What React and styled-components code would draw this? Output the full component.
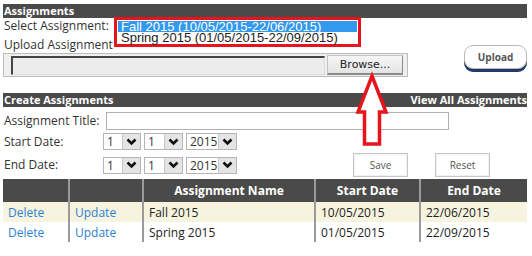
import React from 'react';
import styled, { createGlobalStyle } from 'styled-components';

const GlobalStyle = createGlobalStyle`
  body {
    margin: 0;
    background: #fff;
    font-family: "Open Sans", "Noto Sans", sans-serif;
    color: #333;
  }
`;

const Page = styled.div`
  position: relative;
  width: 524px;
  padding: 4px 5px 0 3px;
`;

const Bar = styled.div`
  height: 14px;
  line-height: 14px;
  background: #4a4a4a;
  color: #fff;
  font-size: 11px;
  font-weight: 700;
  padding-left: 1px;
  display: flex;
  justify-content: space-between;
  margin-top: ${(p) => p.$top || 0}px;
`;

const SelectRow = styled.div`
  height: 13px;
  display: flex;
  align-items: flex-start;
`;

const Label = styled.div`
  width: ${(p) => (p.$w ? `${p.$w}px` : 'auto')};
  flex-shrink: 0;
  font-size: 12px;
  line-height: 16px;
  padding-left: 1px;
  white-space: nowrap;
  color: #333;
`;

const ListBox = styled.div`
  position: relative;
  z-index: 1;
  margin-top: -1px;
  width: 247px;
  height: 30px;
  box-sizing: border-box;
  border: 3px solid #e8141c;
  background: #fff;
  padding: 1px;
  font-family: "Liberation Sans", Arial, sans-serif;
  font-size: 13px;
`;

const Option = styled.div`
  height: 11px;
  line-height: 11px;
  padding-left: 3px;
  white-space: nowrap;
  background: ${(p) => (p.$selected ? '#3399ee' : 'transparent')};
  color: ${(p) => (p.$selected ? '#fff' : '#222')};
`;

const UploadRow = styled.div`
  margin-top: 6px;
  display: flex;
  justify-content: space-between;
  align-items: flex-end;
`;

const UploadLeft = styled.div`
  display: flex;
  flex-direction: column;
`;

const FileInput = styled.div`
  width: 405px;
  height: 24px;
  box-sizing: border-box;
  border: 1px solid #bcbcbc;
  background: #efefef;
  display: flex;
  align-items: center;
  gap: 2px;
  padding: 0 4px 0 7px;
`;

const FileField = styled.div`
  width: 315px;
  height: 19px;
  box-sizing: border-box;
  border-top: 2px solid #444;
  border-left: 2px solid #444;
  border-right: 1px solid #ddd;
  border-bottom: 1px solid #ddd;
  background: #ececec;
`;

const BrowseButton = styled.div`
  width: 76px;
  height: 20px;
  box-sizing: border-box;
  border: 1px solid #c4c4c4;
  border-right-color: #8c8c8c;
  border-bottom: 2px solid #8c8c8c;
  background: linear-gradient(#f6f6f6, #e4e4e4);
  font-family: "DejaVu Sans", Verdana, sans-serif;
  font-size: 11px;
  line-height: 17px;
  text-align: center;
  color: #222;
`;

const UploadButton = styled.div`
  width: 63px;
  height: 24px;
  margin-bottom: 8px;
  box-sizing: border-box;
  border: 1px solid #b8b8b8;
  border-radius: 9px;
  background: #fff;
  box-shadow: 0 3px 0 #1f3b66;
  font-size: 10px;
  font-weight: 700;
  line-height: 22px;
  text-align: center;
  color: #555;
`;

const FormRow = styled.div`
  display: flex;
  align-items: center;
  height: ${(p) => p.$h}px;
  margin-top: ${(p) => p.$top}px;
`;

const TextBox = styled.div`
  width: 343px;
  height: 18px;
  box-sizing: border-box;
  border: 1px solid #b0b0b0;
  background: #fff;
`;

const Dates = styled.div`
  display: flex;
  gap: 3px;
`;

const Dropdown = styled.div`
  width: ${(p) => p.$w}px;
  height: 17px;
  box-sizing: border-box;
  border: 1px solid #b5b5b5;
  background: #fff;
  display: flex;
  align-items: center;
  justify-content: space-between;
  font-size: 12px;
  color: #333;
  padding-left: 3px;
`;

const Chevron = styled.div`
  width: 17px;
  height: 15px;
  background: #e4e4e4;
  border-left: 1px solid #c8c8c8;
  display: flex;
  align-items: center;
  justify-content: center;
`;

const Actions = styled.div`
  display: flex;
  gap: 27px;
  margin-left: auto;
  margin-right: 37px;
`;

const PlainButton = styled.div`
  width: 55px;
  height: 24px;
  box-sizing: border-box;
  border: 1px solid #c6c6c6;
  box-shadow: inset 0 0 0 1px #f2f2f2;
  background: #fff;
  font-size: 10px;
  line-height: 22px;
  text-align: center;
  color: #555;
`;

const Table = styled.table`
  margin-top: 2px;
  width: 524px;
  border-collapse: collapse;
  table-layout: fixed;
  font-size: 12px;
`;

const Th = styled.th`
  height: 23px;
  padding: 0;
  background: #4a4a4a;
  color: #fff;
  font-weight: 700;
  text-align: center;
  border-left: ${(p) => (p.$first ? 'none' : '2px solid #9a9a9a')};
`;

const Tr = styled.tr`
  background: ${(p) => (p.$alt ? '#f6f4df' : '#fff')};
`;

const Td = styled.td`
  height: 20px;
  padding: 0 0 0 5px;
  white-space: nowrap;
  color: ${(p) => (p.$link ? '#2f7fd3' : '#222')};
  border-left: ${(p) => (p.$first ? 'none' : '2px solid #9a9a9a')};
`;

const Arrow = styled.svg`
  position: absolute;
  left: 355px;
  top: 71px;
  z-index: 2;
`;

const ChevronIcon = () => (
  <svg width="11" height="8" viewBox="0 0 11 8">
    <path d="M1.5 1.5 L5.5 5.5 L9.5 1.5" fill="none" stroke="#111" strokeWidth="2.6" />
  </svg>
);

const Select = ({ w, value }) => (
  <Dropdown $w={w}>
    <span>{value}</span>
    <Chevron>
      <ChevronIcon />
    </Chevron>
  </Dropdown>
);

const DateSelects = () => (
  <Dates>
    <Select w={38} value="1" />
    <Select w={39} value="1" />
    <Select w={51} value="2015" />
  </Dates>
);

const rows = [
  { name: 'Fall 2015', start: '10/05/2015', end: '22/06/2015' },
  { name: 'Spring 2015', start: '01/05/2015', end: '22/09/2015' },
];

export default function App() {
  return (
    <>
      <GlobalStyle />
      <Page>
        <Bar>
          <span>Assignments</span>
        </Bar>
        <SelectRow>
          <Label $w={110}>Select Assignment:</Label>
          <ListBox>
            <Option $selected>Fall 2015 (10/05/2015-22/06/2015)</Option>
            <Option>Spring 2015 (01/05/2015-22/09/2015)</Option>
          </ListBox>
        </SelectRow>
        <UploadRow>
          <UploadLeft>
            <Label>Upload Assignment</Label>
            <FileInput>
              <FileField />
              <BrowseButton>Browse...</BrowseButton>
            </FileInput>
          </UploadLeft>
          <UploadButton>Upload</UploadButton>
        </UploadRow>

        <Bar $top={16}>
          <span>Create Assignments</span>
          <span>View All Assignments</span>
        </Bar>
        <FormRow $h={18} $top={5}>
          <Label $w={102}>Assignment Title:</Label>
          <TextBox />
        </FormRow>
        <FormRow $h={17} $top={3}>
          <Label $w={99}>Start Date:</Label>
          <DateSelects />
        </FormRow>
        <FormRow $h={24} $top={3}>
          <Label $w={99}>End Date:</Label>
          <DateSelects />
          <Actions>
            <PlainButton>Save</PlainButton>
            <PlainButton>Reset</PlainButton>
          </Actions>
        </FormRow>

        <Table>
          <colgroup>
            <col style={{ width: 66 }} />
            <col style={{ width: 74 }} />
            <col style={{ width: 172 }} />
            <col style={{ width: 105 }} />
            <col style={{ width: 107 }} />
          </colgroup>
          <thead>
            <tr>
              <Th $first />
              <Th />
              <Th>Assignment Name</Th>
              <Th>Start Date</Th>
              <Th>End Date</Th>
            </tr>
          </thead>
          <tbody>
            {rows.map((r, i) => (
              <Tr key={r.name} $alt={i === 0}>
                <Td $first $link>Delete</Td>
                <Td $link>Update</Td>
                <Td>{r.name}</Td>
                <Td>{r.start}</Td>
                <Td>{r.end}</Td>
              </Tr>
            ))}
          </tbody>
        </Table>

        <Arrow width="34" height="76" viewBox="0 0 34 76">
          <polygon
            points="17,5 31,41 24.5,41 24.5,73 9.5,73 9.5,41 3,41"
            fill="#fff"
            stroke="#e8141c"
            strokeWidth="3.5"
            strokeLinejoin="miter"
          />
        </Arrow>
      </Page>
    </>
  );
}
